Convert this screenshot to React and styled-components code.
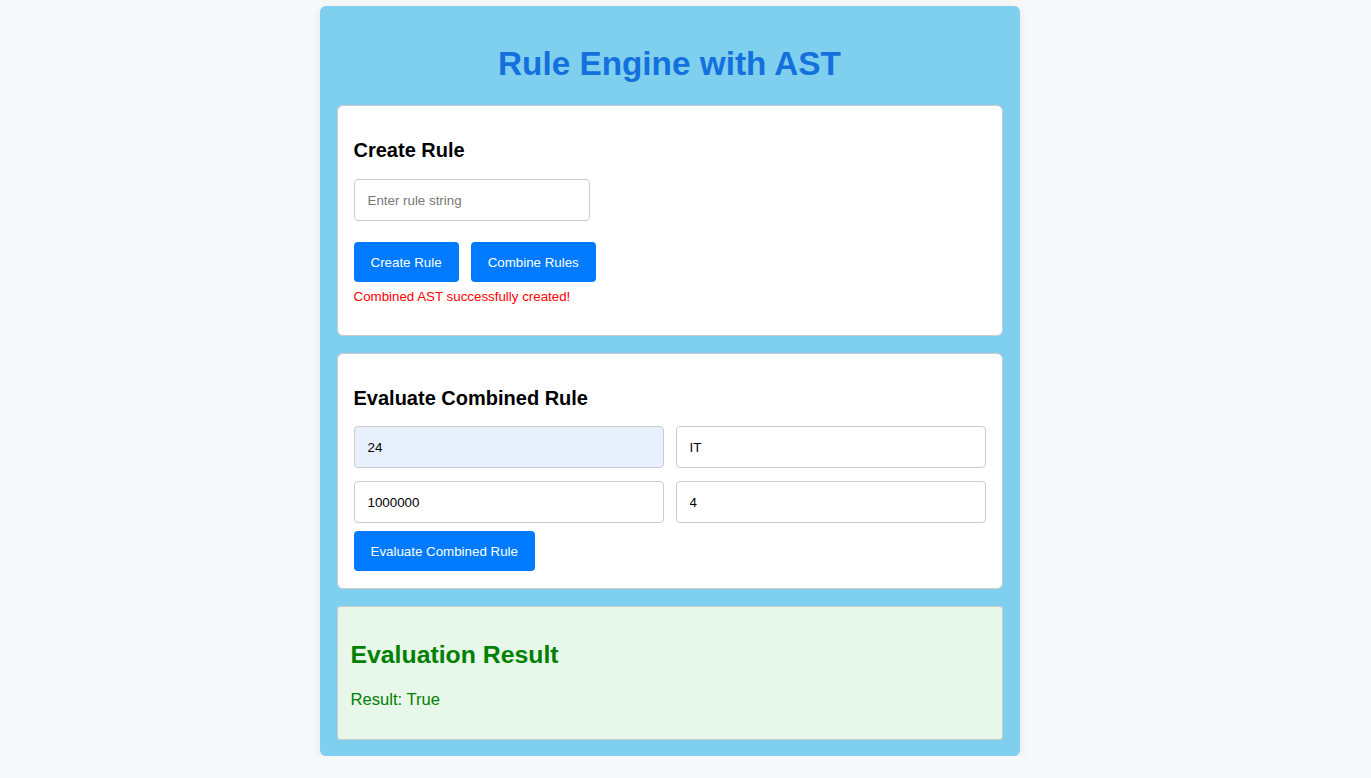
import React from "react";
import styled, { createGlobalStyle } from "styled-components";

const Global = createGlobalStyle`
  html, body { margin: 0; padding: 0; background: #f7f8fa; }
  body { font-family: "Liberation Sans", Arial, sans-serif; }
  * { box-sizing: border-box; }
`;

const Page = styled.div`
  padding: 6px 32px 0 0;
`;

const Container = styled.div`
  width: 700px;
  margin: 0 auto;
  padding: 17px 17px 16px;
  background: #7fcfef;
  border-radius: 6px;
  box-shadow: 0 2px 10px rgba(0, 0, 0, 0.08);
`;

const Title = styled.h1`
  margin: 22px 0 22px;
  font-size: 33.3px;
  font-weight: bold;
  color: #1470dd;
  text-align: center;
  line-height: 38px;
`;

const Card = styled.section`
  background: ${(p) => (p.$result ? "#e7f7e9" : "#fff")};
  border: 1px solid #cccccc;
  border-radius: ${(p) => (p.$result ? "3px" : "6px")};
  padding: ${(p) => (p.$result ? "13px 13px 13px" : "17px 16px")};
  margin-bottom: ${(p) => p.$mb || "0"};
`;

const CardTitle = styled.h2`
  margin: 16px 0 ${(p) => p.$mb || "16px"};
  font-size: 20px;
  line-height: 23px;
  font-weight: bold;
  color: #000;
`;

const ResultTitle = styled.h2`
  margin: 21px 0 21px;
  font-size: 24.8px;
  line-height: 28px;
  font-weight: bold;
  color: #008000;
`;

const ResultText = styled.p`
  margin: 0 0 16px;
  font-size: 16.6px;
  line-height: 20px;
  color: #008000;
`;

const Input = styled.input`
  display: block;
  width: ${(p) => p.$w || "100%"};
  height: 42px;
  padding: 0 13px;
  border: 1px solid #cccccc;
  border-radius: 4px;
  font-family: "Liberation Sans", Arial, sans-serif;
  font-size: 13.33px;
  color: #000;
  background: ${(p) => (p.$filled ? "#e8f0fe" : "#fff")};
  outline: none;
  &::placeholder { color: #777; }
`;

const ButtonRow = styled.div`
  display: flex;
  gap: 12px;
  margin-top: 21px;
`;

const Button = styled.button`
  height: 40px;
  padding: 0 17px;
  border: none;
  border-radius: 4px;
  background: #007bff;
  color: #fff;
  font-family: "Liberation Sans", Arial, sans-serif;
  font-size: 13.33px;
  cursor: pointer;
`;

const Message = styled.p`
  margin: 7px 0 14px;
  font-size: 13.33px;
  line-height: 15px;
  color: #ff0000;
`;

const Grid = styled.div`
  display: grid;
  grid-template-columns: 1fr 1fr;
  column-gap: 12px;
  row-gap: 13px;
  margin-bottom: 8px;
`;

export default function App() {
  return (
    <Page>
      <Global />
      <Container>
        <Title>Rule Engine with AST</Title>
        <Card $mb="17px">
          <CardTitle $mb="17px">Create Rule</CardTitle>
          <Input $w="236px" placeholder="Enter rule string" />
          <ButtonRow>
            <Button>Create Rule</Button>
            <Button>Combine Rules</Button>
          </ButtonRow>
          <Message>Combined AST successfully created!</Message>
        </Card>
        <Card $mb="17px">
          <CardTitle>Evaluate Combined Rule</CardTitle>
          <Grid>
            <Input $filled defaultValue="24" />
            <Input defaultValue="IT" />
            <Input defaultValue="1000000" />
            <Input defaultValue="4" />
          </Grid>
          <Button>Evaluate Combined Rule</Button>
        </Card>
        <Card $result>
          <ResultTitle>Evaluation Result</ResultTitle>
          <ResultText>Result: True</ResultText>
        </Card>
      </Container>
    </Page>
  );
}
